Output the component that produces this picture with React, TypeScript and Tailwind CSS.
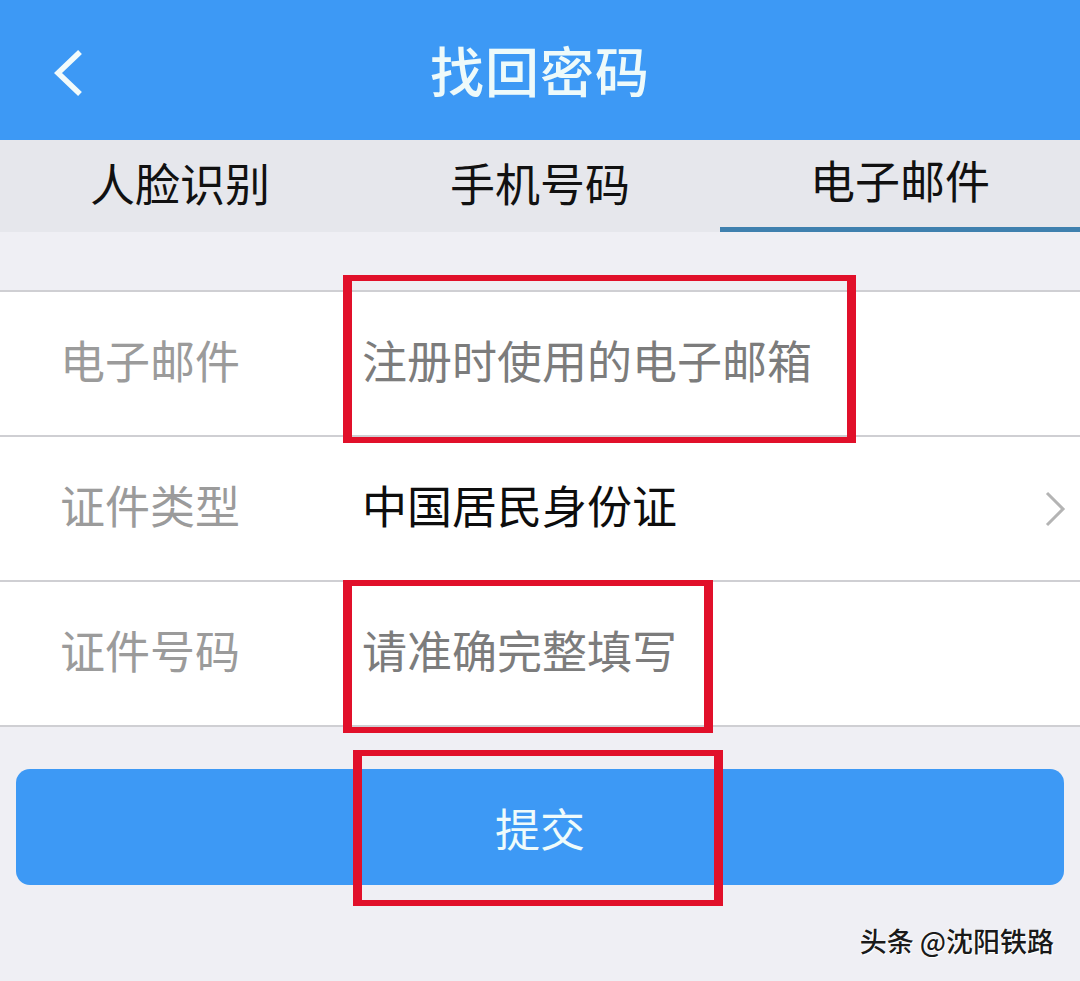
import React from "react";

const font = "font-['Noto_Sans_CJK_SC','Noto_Sans',sans-serif]";

const rows = [
  { label: "电子邮件", value: "注册时使用的电子邮箱", placeholder: true, arrow: false },
  { label: "证件类型", value: "中国居民身份证", placeholder: false, arrow: true },
  { label: "证件号码", value: "请准确完整填写", placeholder: true, arrow: false },
];

const tabs = ["人脸识别", "手机号码", "电子邮件"];

const App = () => {
  return (
    <div className={`relative w-[1080px] h-[981px] bg-[#efeff4] overflow-hidden ${font}`}>
      {/* header */}
      <div className="h-[140px] bg-[#3d99f5] grid grid-cols-[180px_1fr_180px] items-center">
        <div className="pl-[50px] pt-[6px]">
          <svg width="34" height="46" viewBox="0 0 34 46" fill="none">
            <polyline points="28,4 8,23 28,42" stroke="#f2fbfb" strokeWidth="5.5" strokeLinecap="square" />
          </svg>
        </div>
        <h1 className="text-center text-[54px] leading-none font-medium text-[#eefafa] tracking-[1px]">找回密码</h1>
        <div />
      </div>

      {/* tabs */}
      <div className="grid grid-cols-3 h-[92px] bg-[#e6e7ec]">
        {tabs.map((t, i) => (
          <div
            key={t}
            className={`flex items-center justify-center text-[45px] leading-none text-[#111] pb-[8px] ${
              i === 2 ? "border-b-[5px] border-[#3f80ae]" : ""
            }`}
          >
            {t}
          </div>
        ))}
      </div>

      <div className="h-[58px]" />

      {/* form */}
      <div className="bg-white border-t-2 border-[#cfcfd3]">
        {rows.map((r) => (
          <div key={r.label} className="h-[145px] border-b-2 border-[#cfcfd3] flex items-center">
            <div className="w-[362px] pl-[60px] pb-[8px] text-[45px] leading-none text-[#9b9b9b]">{r.label}</div>
            <div
              className={`flex-1 pb-[8px] text-[45px] leading-none ${r.placeholder ? "text-[#7c7c7c]" : "text-[#0d0d0d]"}`}
            >
              {r.value}
            </div>
            {r.arrow && (
              <svg className="mr-[14px]" width="22" height="36" viewBox="0 0 22 36" fill="none">
                <polyline points="3,2 19,18 3,34" stroke="#b4b4b4" strokeWidth="3" />
              </svg>
            )}
          </div>
        ))}
      </div>

      {/* submit */}
      <div className="px-[16px] pt-[42px]">
        <button className="w-full h-[116px] rounded-[14px] bg-[#3d99f5] text-[45px] leading-none text-[#effbfb]">
          提交
        </button>
      </div>

      <div className="flex justify-end pr-[26px] pt-[42px]">
        <span className="text-[27px] leading-none font-medium text-[#1a1a1a] [text-shadow:1px_1px_0_#ffffff,-1px_0_0_#ffffff]">
          头条 @沈阳铁路
        </span>
      </div>

      {/* red annotation boxes */}
      <div className="absolute left-[343px] top-[275px] w-[513px] h-[168px] border-x-[9px] border-y-[6px] border-[#e1102a]" />
      <div className="absolute left-[343px] top-[580px] w-[370px] h-[153px] border-x-[9px] border-y-[6px] border-[#e1102a]" />
      <div className="absolute left-[353px] top-[750px] w-[370px] h-[156px] border-x-[9px] border-y-[6px] border-[#e1102a]" />
    </div>
  );
};

export default App;
